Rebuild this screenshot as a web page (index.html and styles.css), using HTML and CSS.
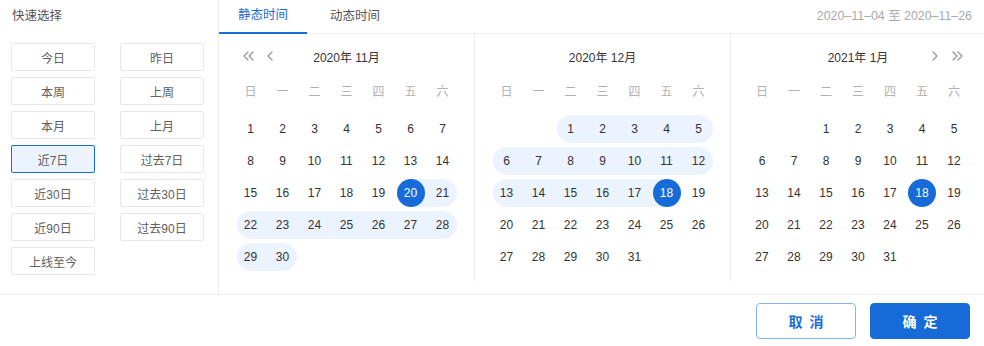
FILE: index.html
```html
<!DOCTYPE html>
<html lang="zh-CN">
<head>
<meta charset="utf-8">
<title>日期选择</title>
<link rel="stylesheet" href="styles.css">
</head>
<body>
<div class="picker">
  <div class="main">
    <aside class="quick">
      <div class="quick-title">快速选择</div>
      <div class="quick-grid">
        <button class="qbtn">今日</button>
        <button class="qbtn">昨日</button>
        <button class="qbtn">本周</button>
        <button class="qbtn">上周</button>
        <button class="qbtn">本月</button>
        <button class="qbtn">上月</button>
        <button class="qbtn active">近7日</button>
        <button class="qbtn">过去7日</button>
        <button class="qbtn">近30日</button>
        <button class="qbtn">过去30日</button>
        <button class="qbtn">近90日</button>
        <button class="qbtn">过去90日</button>
        <button class="qbtn">上线至今</button>
      </div>
    </aside>
    <section class="right">
      <div class="tabbar">
        <div class="tabs">
          <div class="tab active">静态时间</div>
          <div class="tab">动态时间</div>
        </div>
        <div class="range-text">2020–11–04 至 2020–11–26</div>
      </div>
      <div class="cals">
        <div class="cal">
          <div class="cal-head">
            <div class="nav nav-left">
              <svg class="ico dbl" viewBox="0 0 11 10"><path d="M5 1 L1 5 L5 9 M10 1 L6 5 L10 9"/></svg>
              <svg class="ico sgl" viewBox="0 0 6 10"><path d="M5 1 L1 5 L5 9"/></svg>
            </div>
            <div class="cal-title">2020年 11月</div>
            <div class="nav nav-right"></div>
          </div>
          <div class="week"><span>日</span><span>一</span><span>二</span><span>三</span><span>四</span><span>五</span><span>六</span></div>
          <div class="days">
            <div class="d"><span>1</span></div><div class="d"><span>2</span></div><div class="d"><span>3</span></div><div class="d"><span>4</span></div><div class="d"><span>5</span></div><div class="d"><span>6</span></div><div class="d"><span>7</span></div>
            <div class="d"><span>8</span></div><div class="d"><span>9</span></div><div class="d"><span>10</span></div><div class="d"><span>11</span></div><div class="d"><span>12</span></div><div class="d"><span>13</span></div><div class="d"><span>14</span></div>
            <div class="d"><span>15</span></div><div class="d"><span>16</span></div><div class="d"><span>17</span></div><div class="d"><span>18</span></div><div class="d"><span>19</span></div><div class="d in st sel"><span>20</span></div><div class="d in re"><span>21</span></div>
            <div class="d in rs"><span>22</span></div><div class="d in"><span>23</span></div><div class="d in"><span>24</span></div><div class="d in"><span>25</span></div><div class="d in"><span>26</span></div><div class="d in"><span>27</span></div><div class="d in re"><span>28</span></div>
            <div class="d in rs"><span>29</span></div><div class="d in re"><span>30</span></div>
          </div>
        </div>
        <div class="cal mid">
          <div class="cal-head">
            <div class="nav nav-left"></div>
            <div class="cal-title">2020年 12月</div>
            <div class="nav nav-right"></div>
          </div>
          <div class="week"><span>日</span><span>一</span><span>二</span><span>三</span><span>四</span><span>五</span><span>六</span></div>
          <div class="days">
            <div class="d"></div><div class="d"></div><div class="d in rs"><span>1</span></div><div class="d in"><span>2</span></div><div class="d in"><span>3</span></div><div class="d in"><span>4</span></div><div class="d in re"><span>5</span></div>
            <div class="d in rs"><span>6</span></div><div class="d in"><span>7</span></div><div class="d in"><span>8</span></div><div class="d in"><span>9</span></div><div class="d in"><span>10</span></div><div class="d in"><span>11</span></div><div class="d in re"><span>12</span></div>
            <div class="d in rs"><span>13</span></div><div class="d in"><span>14</span></div><div class="d in"><span>15</span></div><div class="d in"><span>16</span></div><div class="d in"><span>17</span></div><div class="d in en sel"><span>18</span></div><div class="d"><span>19</span></div>
            <div class="d"><span>20</span></div><div class="d"><span>21</span></div><div class="d"><span>22</span></div><div class="d"><span>23</span></div><div class="d"><span>24</span></div><div class="d"><span>25</span></div><div class="d"><span>26</span></div>
            <div class="d"><span>27</span></div><div class="d"><span>28</span></div><div class="d"><span>29</span></div><div class="d"><span>30</span></div><div class="d"><span>31</span></div>
          </div>
        </div>
        <div class="cal last">
          <div class="cal-head">
            <div class="nav nav-left"></div>
            <div class="cal-title">2021年 1月</div>
            <div class="nav nav-right">
              <svg class="ico sgl" viewBox="0 0 6 10"><path d="M1 1 L5 5 L1 9"/></svg>
              <svg class="ico dbl" viewBox="0 0 11 10"><path d="M1 1 L5 5 L1 9 M6 1 L10 5 L6 9"/></svg>
            </div>
          </div>
          <div class="week"><span>日</span><span>一</span><span>二</span><span>三</span><span>四</span><span>五</span><span>六</span></div>
          <div class="days">
            <div class="d"></div><div class="d"></div><div class="d"><span>1</span></div><div class="d"><span>2</span></div><div class="d"><span>3</span></div><div class="d"><span>4</span></div><div class="d"><span>5</span></div>
            <div class="d"><span>6</span></div><div class="d"><span>7</span></div><div class="d"><span>8</span></div><div class="d"><span>9</span></div><div class="d"><span>10</span></div><div class="d"><span>11</span></div><div class="d"><span>12</span></div>
            <div class="d"><span>13</span></div><div class="d"><span>14</span></div><div class="d"><span>15</span></div><div class="d"><span>16</span></div><div class="d"><span>17</span></div><div class="d sel"><span>18</span></div><div class="d"><span>19</span></div>
            <div class="d"><span>20</span></div><div class="d"><span>21</span></div><div class="d"><span>22</span></div><div class="d"><span>23</span></div><div class="d"><span>24</span></div><div class="d"><span>25</span></div><div class="d"><span>26</span></div>
            <div class="d"><span>27</span></div><div class="d"><span>28</span></div><div class="d"><span>29</span></div><div class="d"><span>30</span></div><div class="d"><span>31</span></div>
          </div>
        </div>
      </div>
    </section>
  </div>
  <footer class="footer">
    <button class="btn btn-cancel">取消</button>
    <button class="btn btn-ok">确定</button>
  </footer>
</div>
</body>
</html>
```

FILE: styles.css
```css
* { box-sizing: border-box; }
html, body { margin: 0; padding: 0; background: #fff; }
body {
  font-family: "Liberation Sans", "Noto Sans CJK SC", sans-serif;
  color: #333;
  width: 984px;
  height: 346px;
  overflow: hidden;
}
.picker { display: flex; flex-direction: column; width: 984px; height: 346px; }
.main { display: flex; height: 295px; border-bottom: 1px solid #ececec; }

/* quick select */
.quick { width: 219px; border-right: 1px solid #ececec; flex: none; }
.quick-title {
  height: 33px;
  line-height: 33px;
  padding-left: 12px;
  font-size: 12.5px;
  color: #555;
}
.quick-grid {
  display: grid;
  grid-template-columns: 84px 84px;
  column-gap: 25px;
  row-gap: 6px;
  padding: 10px 0 0 11px;
}
.qbtn {
  height: 28px;
  border: 1px solid #e8e8e8;
  border-radius: 2px;
  background: #fff;
  font-family: inherit;
  font-size: 12px;
  color: #606060;
  padding: 0;
}
.qbtn.active { border-color: #1a6dd8; background: #ebf3fe; }

/* right */
.right { flex: 1; display: flex; flex-direction: column; }
.tabbar {
  height: 34px;
  border-bottom: 1px solid #eeeeee;
  display: flex;
  align-items: stretch;
  justify-content: space-between;
}
.tabs { display: flex; gap: 4px; }
.tab {
  padding: 0 19px;
  font-size: 12.5px;
  line-height: 32px;
  color: #555;
  border-bottom: 2px solid transparent;
}
.tab.active { color: #1a6dd8; border-bottom-color: #1a6dd8; margin-bottom: -1px; line-height: 31px; }
.range-text {
  padding-right: 13px;
  font-size: 12.4px;
  color: #a8a8a8;
  line-height: 33px;
}

.cals { display: flex; align-items: flex-start; }
.cal { width: 255px; height: 247px; flex: none; }
.cal.mid { width: 256px; border-left: 1px solid #ececec; }
.cal.last { flex: 1; border-left: 1px solid #ececec; }

.cal-head {
  width: 224px;
  margin: 0 auto;
  height: 44px;
  display: grid;
  grid-template-columns: 1fr auto 1fr;
  align-items: center;
}
.cal-title { font-size: 12px; color: #333; text-align: center; }
.nav { display: flex; align-items: center; height: 10px; }
.nav-left { padding-left: 8px; gap: 13px; }
.nav-right { justify-content: flex-end; padding-right: 7px; gap: 14px; }
.ico { height: 10px; fill: none; stroke: #9a9a9a; stroke-width: 1.4; stroke-linecap: round; stroke-linejoin: round; }
.ico.dbl { width: 11px; }
.ico.sgl { width: 6px; }

.week {
  width: 224px;
  margin: 0 auto;
  height: 24px;
  display: grid;
  grid-template-columns: repeat(7, 32px);
  align-items: center;
  font-size: 12px;
  color: #b0b0b0;
  text-align: center;
}
.days {
  width: 224px;
  margin: 13px auto 0;
  display: grid;
  grid-template-columns: repeat(7, 32px);
  row-gap: 4px;
}
.d {
  position: relative;
  height: 28px;
  display: flex;
  align-items: center;
  justify-content: center;
  font-size: 12px;
  color: #333;
}
.d span {
  position: relative;
  z-index: 1;
  width: 28px;
  height: 28px;
  border-radius: 50%;
  display: flex;
  align-items: center;
  justify-content: center;
}
.d.in::before {
  content: "";
  position: absolute;
  top: 0; bottom: 0; left: 0; right: 0;
  background: #ebf3fe;
}
.d.rs::before { left: 2px; border-radius: 14px 0 0 14px; }
.d.re::before { right: 2px; border-radius: 0 14px 14px 0; }
.d.st::before { left: 50%; }
.d.en::before { right: 50%; }
.d.sel span { background: #176bd8; color: #fff; }

/* footer */
.footer {
  flex: 1;
  display: flex;
  align-items: center;
  justify-content: flex-end;
  gap: 14px;
  padding-right: 14px;
}
.btn {
  width: 100px;
  height: 36px;
  border-radius: 4px;
  font-family: inherit;
  font-size: 14px;
  font-weight: 700;
  letter-spacing: 7px;
  text-indent: 7px;
  padding: 0;
}
.btn-cancel { background: #fff; border: 1px solid #86b3ee; color: #1a6dd8; }
.btn-ok { background: #176bd8; border: 1px solid #176bd8; color: #fff; }
```
